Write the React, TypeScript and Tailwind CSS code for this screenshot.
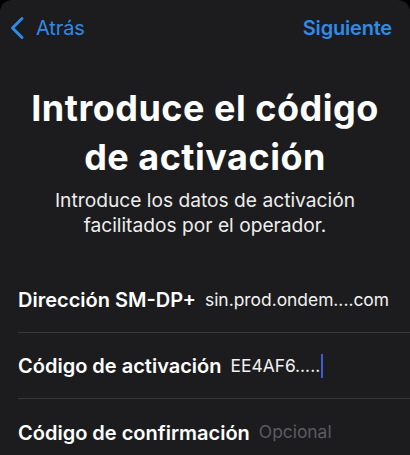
const rows = [
  { label: "Dirección SM-DP+", value: "sin.prod.ondem....com", kind: "value" },
  { label: "Código de activación", value: "EE4AF6.....", kind: "cursor" },
  { label: "Código de confirmación", value: "Opcional", kind: "placeholder" },
];

function BackChevron() {
  return (
    <svg width="16" height="24" viewBox="0 0 16 24" fill="none" className="block">
      <path d="M13 2.5L3.5 12L13 21.5" stroke="currentColor" strokeWidth="3" strokeLinecap="round" strokeLinejoin="round" />
    </svg>
  );
}

export default function App() {
  return (
    <div
      className="w-[410px] h-[455px] overflow-hidden bg-black"
      style={{ fontFamily: "Inter, 'Noto Sans', sans-serif" }}
    >
      <div className="h-full rounded-t-[12px] bg-[#1c1c1e] text-white">
        {/* nav bar */}
        <div className="flex items-center justify-between h-[56px] pl-[9px] pr-[18px]">
          <div className="flex items-center text-[#2f8ae8]">
            <BackChevron />
            <span className="ml-[11px] text-[20px] tracking-[-0.1px]">Atrás</span>
          </div>
          <span className="text-[20px] font-semibold text-[#2f8ae8] tracking-[-0.2px]">Siguiente</span>
        </div>

        {/* heading */}
        <div className="mt-[28px] px-[10px] text-center">
          <h1 className="text-[36px] leading-[49px] font-bold tracking-[0.5px]">
            Introduce el código
            <br />
            de activación
          </h1>
          <p className="mt-[6px] text-[19.2px] leading-[25px] text-[#ededed]">
            Introduce los datos de activación
            <br />
            facilitados por el operador.
          </p>
        </div>

        {/* form rows */}
        <div className="mt-[29px] pl-[18px]">
          {rows.map((r, i) => (
            <div
              key={r.label}
              className={`flex items-center h-[66px] pt-[1px] pr-[18px] ${i < rows.length - 1 ? "border-b border-[#38383a]" : ""}`}
            >
              <span className="text-[20px] font-semibold whitespace-nowrap">{r.label}</span>
              {r.kind === "value" && (
                <span className="ml-[9px] text-[17.4px] whitespace-nowrap text-[#f2f2f2]">{r.value}</span>
              )}
              {r.kind === "cursor" && (
                <span className="ml-[9px] flex items-center text-[17.4px] whitespace-nowrap text-[#f2f2f2]">
                  {r.value}
                  <span className="ml-[1px] inline-block w-[2px] h-[24px] bg-[#3b5bdb]" />
                </span>
              )}
              {r.kind === "placeholder" && (
                <span className="ml-[9px] text-[17.4px] whitespace-nowrap text-[#5b5b60]">{r.value}</span>
              )}
            </div>
          ))}
        </div>
      </div>
    </div>
  );
}
